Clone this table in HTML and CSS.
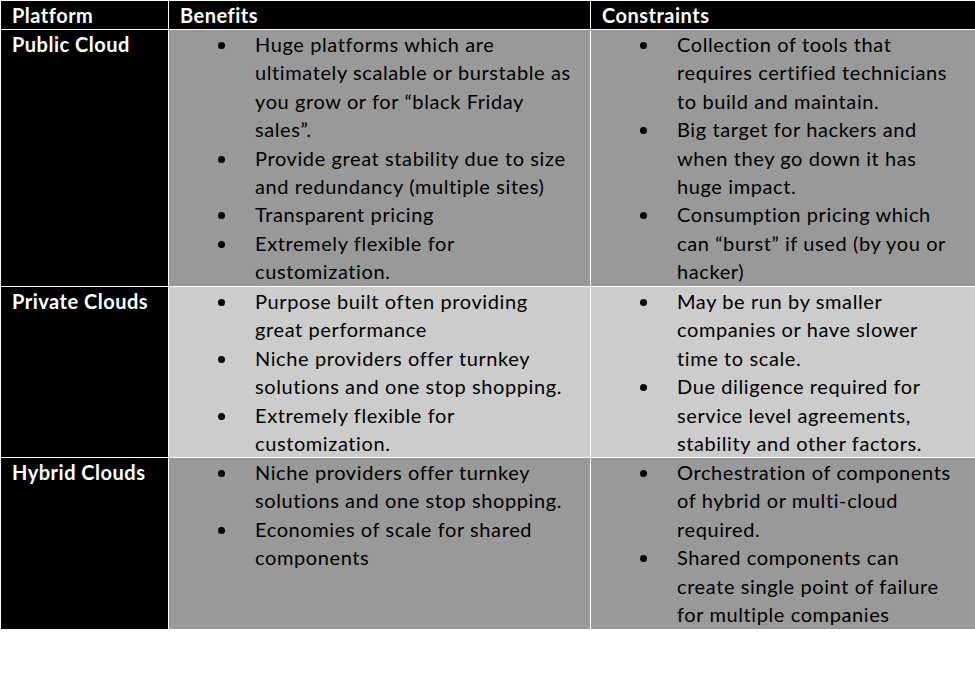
FILE: index.html
```html
<!DOCTYPE html>
<html lang="en">
<head>
<meta charset="utf-8">
<title>Cloud Platforms</title>
<link rel="stylesheet" href="styles.css">
</head>
<body>
<div class="table">
  <div class="cell head">Platform</div>
  <div class="cell head">Benefits</div>
  <div class="cell head">Constraints</div>

  <div class="cell label">Public Cloud</div>
  <div class="cell mid">
    <ul class="list">
      <li>Huge platforms which are<br>ultimately scalable or burstable as<br>you grow or for “black Friday<br>sales”.</li>
      <li>Provide great stability due to size<br>and redundancy (multiple sites)</li>
      <li>Transparent pricing</li>
      <li>Extremely flexible for<br>customization.</li>
    </ul>
  </div>
  <div class="cell mid">
    <ul class="list">
      <li>Collection of tools that<br>requires certified technicians<br>to build and maintain.</li>
      <li>Big target for hackers and<br>when they go down it has<br>huge impact.</li>
      <li>Consumption pricing which<br>can “burst” if used (by you or<br>hacker)</li>
    </ul>
  </div>

  <div class="cell label">Private Clouds</div>
  <div class="cell light">
    <ul class="list">
      <li>Purpose built often providing<br>great performance</li>
      <li>Niche providers offer turnkey<br>solutions and one stop shopping.</li>
      <li>Extremely flexible for<br>customization.</li>
    </ul>
  </div>
  <div class="cell light">
    <ul class="list">
      <li>May be run by smaller<br>companies or have slower<br>time to scale.</li>
      <li>Due diligence required for<br>service level agreements,<br>stability and other factors.</li>
    </ul>
  </div>

  <div class="cell label">Hybrid Clouds</div>
  <div class="cell mid">
    <ul class="list">
      <li>Niche providers offer turnkey<br>solutions and one stop shopping.</li>
      <li>Economies of scale for shared<br>components</li>
    </ul>
  </div>
  <div class="cell mid">
    <ul class="list">
      <li>Orchestration of components<br>of hybrid or multi-cloud<br>required.</li>
      <li>Shared components can<br>create single point of failure<br>for multiple companies</li>
    </ul>
  </div>
</div>
</body>
</html>
```

FILE: styles.css
```css
html, body {
  margin: 0;
  padding: 0;
  background: #ffffff;
}

body {
  font-family: Lato, "Liberation Sans", sans-serif;
  font-size: 20px;
  letter-spacing: 0.5px;
  color: #000000;
}

.table {
  display: grid;
  grid-template-columns: 167px 421px 384px;
  grid-template-rows: 28px 256px 170px 171px;
  gap: 1px;
  padding: 1px 0 0 1px;
  width: max-content;
}

.cell {
  line-height: 28.4px;
  overflow: hidden;
}

.head {
  background: #000000;
  color: #ffffff;
  font-weight: 700;
  line-height: 28px;
  padding-left: 11px;
}

.label {
  background: #000000;
  color: #ffffff;
  font-weight: 700;
  padding-left: 11px;
}

.mid {
  background: #999999;
}

.light {
  background: #cccccc;
}

.list {
  list-style: none;
  margin: 0;
  padding: 0 0 0 86px;
  white-space: nowrap;
  letter-spacing: 0.6px;
}

.list li {
  position: relative;
}

.list li::before {
  content: "";
  position: absolute;
  left: -37px;
  top: 12px;
  width: 7px;
  height: 7px;
  border-radius: 50%;
  background: #000000;
}
```
